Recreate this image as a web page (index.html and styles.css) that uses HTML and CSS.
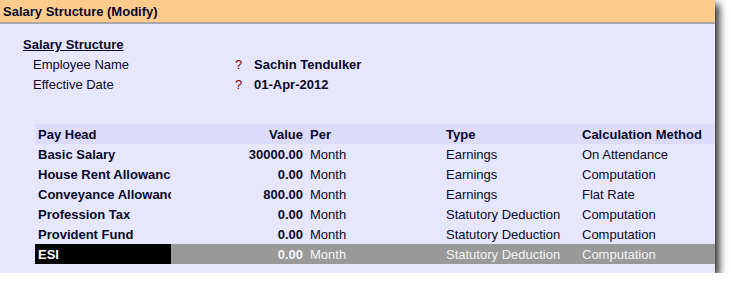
FILE: index.html
```html
<!DOCTYPE html>
<html>
<head>
  <title>Salary Structure (Modify)</title>
  <link rel="stylesheet" href="styles.css">
</head>
<body>

<div class="window">
  <div class="title-bar">Salary Structure (Modify)</div>

  <div class="content">
    <div class="section-title">Salary Structure</div>
    <div class="field">
      <span class="field-label">Employee Name</span>
      <span class="field-mark">?</span>
      <span class="field-value">Sachin Tendulker</span>
    </div>
    <div class="field">
      <span class="field-label">Effective Date</span>
      <span class="field-mark">?</span>
      <span class="field-value">01-Apr-2012</span>
    </div>

    <div class="pay-table">
      <div class="row head">
        <div class="c-head">Pay Head</div>
        <div class="c-value">Value</div>
        <div class="c-per">Per</div>
        <div class="c-type">Type</div>
        <div class="c-calc">Calculation Method</div>
      </div>
      <div class="row">
        <div class="c-head">Basic Salary</div>
        <div class="c-value">30000.00</div>
        <div class="c-per">Month</div>
        <div class="c-type">Earnings</div>
        <div class="c-calc">On Attendance</div>
      </div>
      <div class="row">
        <div class="c-head">House Rent Allowance</div>
        <div class="c-value">0.00</div>
        <div class="c-per">Month</div>
        <div class="c-type">Earnings</div>
        <div class="c-calc">Computation</div>
      </div>
      <div class="row">
        <div class="c-head">Conveyance Allowance</div>
        <div class="c-value">800.00</div>
        <div class="c-per">Month</div>
        <div class="c-type">Earnings</div>
        <div class="c-calc">Flat Rate</div>
      </div>
      <div class="row">
        <div class="c-head">Profession Tax</div>
        <div class="c-value">0.00</div>
        <div class="c-per">Month</div>
        <div class="c-type">Statutory Deduction</div>
        <div class="c-calc">Computation</div>
      </div>
      <div class="row">
        <div class="c-head">Provident Fund</div>
        <div class="c-value">0.00</div>
        <div class="c-per">Month</div>
        <div class="c-type">Statutory Deduction</div>
        <div class="c-calc">Computation</div>
      </div>
      <div class="row selected">
        <div class="c-head">ESI</div>
        <div class="c-value">0.00</div>
        <div class="c-per">Month</div>
        <div class="c-type">Statutory Deduction</div>
        <div class="c-calc">Computation</div>
      </div>
    </div>
  </div>
</div>

</body>
</html>
```

FILE: styles.css
```css
body {
  margin: 0;
  background-color: white;
  font: 13px "Liberation Sans", Arial, sans-serif;
  color: #0a0a2a;
}

.window {
  width: 715px;
  height: 273px;
  background-color: #e6e6fc;
  box-shadow: 4px 4px 8px rgba(0, 0, 0, 0.85);
}

.title-bar {
  height: 22px;
  line-height: 24px;
  padding-left: 3px;
  background-color: #ffcc8e;
  border-bottom: 2px solid #a8a8a8;
  font-weight: bold;
}

.content {
  padding-top: 11px;
}

.section-title {
  margin-left: 23px;
  line-height: 20px;
  font-weight: bold;
  text-decoration: underline;
}

.field {
  display: flex;
  line-height: 20px;
  padding-left: 33px;
}

.field-label {
  width: 202px;
}

.field-mark {
  width: 19px;
  color: #800000;
}

.field-value {
  font-weight: bold;
}

.pay-table {
  margin-top: 29px;
  margin-left: 35px;
}

.row {
  display: grid;
  grid-template-columns: 136px 135px 136px 136px 1fr;
  grid-template-rows: 20px;
  line-height: 20px;
}

.row > div {
  white-space: nowrap;
  overflow: hidden;
  padding: 1px 4px 0 4px;
}

.row .c-head {
  padding-left: 3px;
  padding-right: 0;
  font-weight: bold;
  text-overflow: clip;
}

.row .c-value {
  text-align: right;
  padding-right: 3px;
  font-weight: bold;
}

.row.head {
  background-color: #dcdcfa;
  font-weight: bold;
}

.row.selected {
  background-color: #999999;
  color: #f4f4f4;
}

.row.selected .c-head {
  background-color: black;
  color: white;
}
```
